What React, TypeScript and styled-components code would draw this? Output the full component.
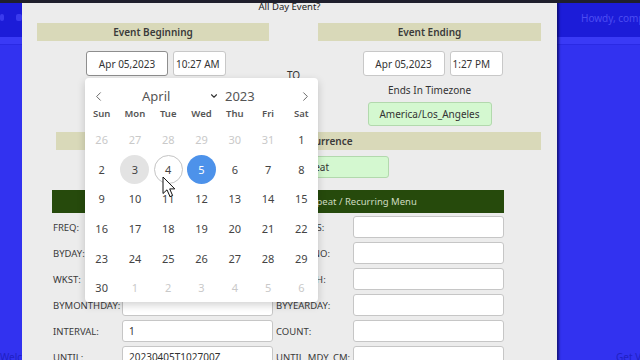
import React from "react";
import styled, { createGlobalStyle } from "styled-components";
import { ChevronDown, ChevronLeft, ChevronRight } from "lucide-react";

const GlobalStyle = createGlobalStyle`
  html, body {
    margin: 0;
    padding: 0;
    background: #3232f0;
  }
  body {
    font-family: "Noto Sans", "Open Sans", sans-serif;
  }
  * {
    box-sizing: border-box;
  }
`;

type DayState = "selected" | "today" | "hover" | undefined;

interface Day {
  label: number;
  muted?: boolean;
  state?: DayState;
}

const buildDays = (): Day[] => {
  const days: Day[] = [];
  for (let d = 26; d <= 31; d++) days.push({ label: d, muted: true });
  for (let d = 1; d <= 30; d++) {
    const state: DayState =
      d === 5 ? "selected" : d === 3 ? "today" : d === 4 ? "hover" : undefined;
    days.push({ label: d, state });
  }
  for (let d = 1; d <= 6; d++) days.push({ label: d, muted: true });
  return days;
};

const WEEKDAYS = ["Sun", "Mon", "Tue", "Wed", "Thu", "Fri", "Sat"];

const FIELDS: [string, string, string][] = [
  ["FREQ:", "", "BYSETPOS:"],
  ["BYDAY:", "", "BYWEEKNO:"],
  ["WKST:", "", "BYMONTH:"],
  ["BYMONTHDAY:", "", "BYYEARDAY:"],
  ["INTERVAL:", "1", "COUNT:"],
  ["UNTIL:", "20230405T102700Z", "UNTIL_MDY_CM:"],
];

export default function App() {
  const days = buildDays();

  return (
    <>
      <GlobalStyle />
      <S.Screen>
        <S.TopEdge />
        <S.AdminBar>
          <S.AdminIcon $width={4} />
          <S.AdminIcon $width={6} $gap={12} />
          <S.Greeting>Howdy, compass</S.Greeting>
        </S.AdminBar>
        <S.SubBar />
        <S.Content>
          <S.Footer>
            <S.FooterText>Welcome</S.FooterText>
            <span />
            <S.FooterText>Get Version 6.2</S.FooterText>
          </S.Footer>
        </S.Content>

        <S.Modal>
          <S.Title>All Day Event?</S.Title>
          <S.DateGrid>
            <S.SectionHeader>Event Beginning</S.SectionHeader>
            <span />
            <S.SectionHeader>Event Ending</S.SectionHeader>

            <S.Side>
              <S.InputPair>
                <S.DateInput readOnly value="Apr 05,2023" $focused />
                <S.TimeInput readOnly value="10:27 AM" />
              </S.InputPair>
              <S.Caption />
              <S.ZoneBox />
            </S.Side>
            <S.ToCell>TO</S.ToCell>
            <S.Side>
              <S.InputPair>
                <S.DateInput readOnly value="Apr 05,2023" />
                <S.TimeInput readOnly value="1:27 PM" />
              </S.InputPair>
              <S.Caption>Ends In Timezone</S.Caption>
              <S.ZoneBox>America/Los_Angeles</S.ZoneBox>
            </S.Side>
          </S.DateGrid>

          <S.RecurrenceHeader>Event Recurrence</S.RecurrenceHeader>
          <S.RepeatRow>
            <S.RepeatBox>Does Not Repeat</S.RepeatBox>
          </S.RepeatRow>
          <S.MenuBar>Repeat / Recurring Menu</S.MenuBar>

          <S.FormGrid>
            {FIELDS.map(([left, value, right]) => (
              <React.Fragment key={left}>
                <S.FieldLabel>{left}</S.FieldLabel>
                <S.FieldInput readOnly value={value} />
                <S.FieldLabel $indent={3}>{right}</S.FieldLabel>
                <S.FieldInput readOnly value="" />
              </React.Fragment>
            ))}
          </S.FormGrid>

          <S.Picker>
            <S.PickerHeader>
              <S.NavButton>
                <ChevronLeft size={15} strokeWidth={1.4} />
              </S.NavButton>
              <S.PickerTitle>
                <S.MonthSelect>
                  April
                  <ChevronDown size={10} strokeWidth={2.6} color="#333" />
                </S.MonthSelect>
                <S.Year>2023</S.Year>
              </S.PickerTitle>
              <S.NavButton>
                <ChevronRight size={15} strokeWidth={1.4} />
              </S.NavButton>
            </S.PickerHeader>
            <S.Weekdays>
              {WEEKDAYS.map((w) => (
                <span key={w}>{w}</span>
              ))}
            </S.Weekdays>
            <S.Days>
              {days.map((day, i) => (
                <S.DayCell key={i}>
                  <S.DayCircle $muted={day.muted} $state={day.state}>
                    {day.label}
                  </S.DayCircle>
                </S.DayCell>
              ))}
            </S.Days>
          </S.Picker>
        </S.Modal>

        <S.Cursor width="15" height="22" viewBox="0 0 15 22">
          <path
            d="M1 1 V17.5 L5 13.8 L8 20.6 L10.6 19.5 L7.7 12.9 H12.8 Z"
            fill="#fff"
            stroke="#111"
            strokeWidth="1"
            strokeLinejoin="round"
          />
        </S.Cursor>
      </S.Screen>
    </>
  );
}

const S = {
  Screen: styled.div`
    position: relative;
    width: 640px;
    height: 360px;
    overflow: hidden;
    display: flex;
    flex-direction: column;
    background: #3232f0;
  `,
  TopEdge: styled.div`
    position: relative;
    z-index: 5;
    height: 3px;
    background: #1f1f2c;
  `,
  AdminBar: styled.div`
    height: 34px;
    display: flex;
    align-items: center;
    background: #1c1cd8;
  `,
  AdminIcon: styled.span<{ $width: number; $gap?: number }>`
    width: ${(p) => p.$width}px;
    height: 7px;
    margin-left: ${(p) => p.$gap ?? 0}px;
    margin-top: -6px;
    border-radius: 2px;
    background: #3a3aee;
  `,
  Greeting: styled.span`
    margin-left: auto;
    flex: 0 0 59px;
    overflow: hidden;
    white-space: nowrap;
    margin-top: -4px;
    font-size: 10px;
    color: #4c4cf2;
  `,
  SubBar: styled.div`
    height: 8px;
    background: #3a3af6;
    border-bottom: 1px solid #2a2ae4;
  `,
  Content: styled.div`
    flex: 1;
    display: flex;
    flex-direction: column;
    justify-content: flex-end;
  `,
  Footer: styled.div`
    display: grid;
    grid-template-columns: 22px 594px 24px;
    height: 9px;
    overflow: hidden;
  `,
  FooterText: styled.span`
    overflow: hidden;
    white-space: nowrap;
    font-size: 10px;
    line-height: 12px;
    color: #2020c4;
  `,
  Modal: styled.div`
    position: absolute;
    left: 22px;
    top: 0;
    z-index: 2;
    width: 535px;
    height: 372px;
    background: #ececec;
    box-shadow: 2px 0 2px rgba(10, 10, 90, 0.75);
    color: #333;
  `,
  Title: styled.div`
    text-align: center;
    font-size: 9.5px;
    line-height: 13px;
    color: #222;
  `,
  DateGrid: styled.div`
    margin-top: 10px;
    padding: 0 16px 0 15px;
    display: grid;
    grid-template-columns: 232px 49px 223px;
  `,
  SectionHeader: styled.div`
    height: 18px;
    display: flex;
    align-items: center;
    justify-content: center;
    background: #d9d9b9;
    font-size: 10px;
    font-weight: 600;
    color: #3a3a3a;
  `,
  Side: styled.div`
    display: flex;
    flex-direction: column;
    align-items: center;
    padding-top: 10px;
  `,
  InputPair: styled.div`
    display: flex;
    gap: 5px;
    padding-left: 6px;
  `,
  DateInput: styled.input<{ $focused?: boolean }>`
    width: 82px;
    height: 25px;
    padding: 0;
    border: 1px solid ${(p) => (p.$focused ? "#8e8e8e" : "#c8c8c8")};
    border-radius: 3px;
    background: #fff;
    font-family: "Noto Sans", sans-serif;
    font-size: 10px;
    color: #333;
    text-align: center;
    outline: none;
  `,
  TimeInput: styled.input`
    width: 53px;
    height: 25px;
    padding: 0 0 0 2px;
    border: 1px solid #c8c8c8;
    border-radius: 3px;
    background: #fff;
    font-family: "Noto Sans", sans-serif;
    font-size: 10px;
    color: #333;
    outline: none;
  `,
  Caption: styled.div`
    margin-top: 7px;
    height: 15px;
    line-height: 15px;
    font-size: 10px;
    color: #333;
  `,
  ZoneBox: styled.div`
    margin-top: 4px;
    width: 124px;
    height: 24px;
    display: flex;
    align-items: center;
    justify-content: center;
    background: #d4f8d0;
    border: 1px solid #b2d9ad;
    border-radius: 3px;
    font-size: 10px;
    color: #333;
  `,
  ToCell: styled.div`
    padding-top: 28px;
    text-align: center;
    font-size: 10px;
    line-height: 12px;
    color: #333;
  `,
  RecurrenceHeader: styled.div`
    margin: 6px 16px 0 34px;
    height: 18px;
    padding-left: 23px;
    display: flex;
    align-items: center;
    justify-content: center;
    background: #d9d9b9;
    font-size: 10px;
    font-weight: 600;
    color: #3a3a3a;
  `,
  RepeatRow: styled.div`
    margin-top: 6px;
    display: flex;
    justify-content: center;
  `,
  RepeatBox: styled.div`
    width: 199px;
    height: 22px;
    display: flex;
    align-items: center;
    justify-content: center;
    background: #d4f8d0;
    border: 1px solid #b2d9ad;
    border-radius: 3px;
    font-size: 10px;
    color: #333;
  `,
  MenuBar: styled.div`
    margin: 12px 0 0 30px;
    width: 452px;
    height: 23px;
    padding-left: 166px;
    display: flex;
    align-items: center;
    justify-content: center;
    background: #264a0c;
    font-size: 9.5px;
    color: #cfdcc0;
  `,
  FormGrid: styled.div`
    margin: 3px 0 0 31px;
    display: grid;
    grid-template-columns: 69px 151px 80px 151px;
    grid-auto-rows: 22px;
    row-gap: 4px;
    align-items: center;
  `,
  FieldLabel: styled.span<{ $indent?: number }>`
    padding-left: ${(p) => p.$indent ?? 0}px;
    font-size: 9.5px;
    color: #3a3a3a;
    white-space: nowrap;
  `,
  FieldInput: styled.input`
    width: 151px;
    height: 22px;
    padding: 0 6px;
    border: 1px solid #c6c6c6;
    border-radius: 3px;
    background: #fff;
    font-family: "Noto Sans", sans-serif;
    font-size: 10px;
    color: #333;
    outline: none;
  `,
  Picker: styled.div`
    position: absolute;
    left: 63px;
    top: 78px;
    width: 233px;
    height: 224px;
    padding-top: 8px;
    background: #fff;
    border-radius: 4px;
    box-shadow: 0 3px 8px rgba(0, 0, 0, 0.18);
  `,
  PickerHeader: styled.div`
    height: 20px;
    display: grid;
    grid-template-columns: 26px 1fr 26px;
    align-items: center;
  `,
  NavButton: styled.span`
    display: flex;
    align-items: center;
    justify-content: center;
    color: #555;
  `,
  PickerTitle: styled.div`
    display: flex;
    align-items: center;
  `,
  MonthSelect: styled.span`
    width: 108px;
    padding-left: 31px;
    display: flex;
    align-items: center;
    justify-content: space-between;
    font-size: 13px;
    color: #555;
  `,
  Year: styled.span`
    margin-left: 6px;
    font-size: 13px;
    color: #555;
  `,
  Weekdays: styled.div`
    height: 16px;
    display: grid;
    grid-template-columns: repeat(7, 1fr);
    text-align: center;
    font-size: 9.5px;
    font-weight: 600;
    line-height: 16px;
    color: #555;
  `,
  Days: styled.div`
    margin-top: 3px;
    display: grid;
    grid-template-columns: repeat(7, 1fr);
    grid-auto-rows: 29.6px;
  `,
  DayCell: styled.div`
    display: flex;
    align-items: center;
    justify-content: center;
  `,
  DayCircle: styled.span<{ $muted?: boolean; $state?: DayState }>`
    width: 29px;
    height: 29px;
    display: flex;
    align-items: center;
    justify-content: center;
    border-radius: 50%;
    font-size: 11px;
    color: ${(p) =>
      p.$state === "selected" ? "#fff" : p.$muted ? "#c9c9c9" : "#444"};
    background: ${(p) =>
      p.$state === "selected"
        ? "#4d92ea"
        : p.$state === "today"
        ? "#e3e3e3"
        : "transparent"};
    border: 1px solid
      ${(p) => (p.$state === "hover" ? "#c4c4c4" : "transparent")};
  `,
  Cursor: styled.svg`
    position: absolute;
    left: 162px;
    top: 176px;
    z-index: 10;
  `,
};
